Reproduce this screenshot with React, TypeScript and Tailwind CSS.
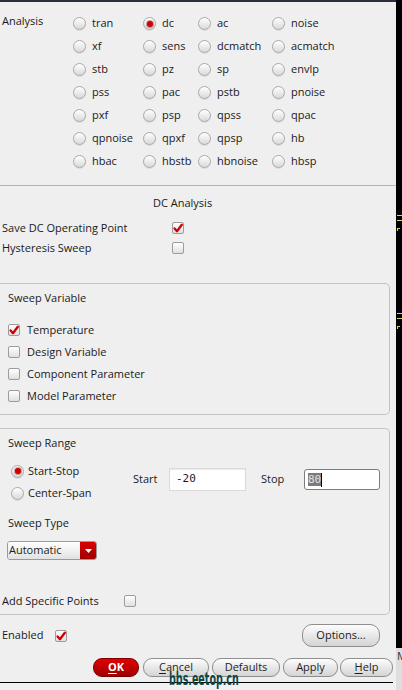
import type { ReactNode } from "react";

const analyses = [
  ["tran", "dc", "ac", "noise"],
  ["xf", "sens", "dcmatch", "acmatch"],
  ["stb", "pz", "sp", "envlp"],
  ["pss", "pac", "pstb", "pnoise"],
  ["pxf", "psp", "qpss", "qpac"],
  ["qpnoise", "qpxf", "qpsp", "hb"],
  ["hbac", "hbstb", "hbnoise", "hbsp"],
];

function Radio({ on }: { on?: boolean }) {
  return (
    <span className="flex h-[13px] w-[13px] shrink-0 items-center justify-center rounded-full border border-[#a9a9a9] bg-linear-to-b from-[#ffffff] to-[#d9d9d9] shadow-[0_1px_0_rgba(0,0,0,0.08)]">
      {on && <span className="h-[6px] w-[6px] rounded-full bg-[#d20000] shadow-[0_0_0_1px_rgba(120,0,0,0.35)]" />}
    </span>
  );
}

function Check({ on }: { on?: boolean }) {
  return (
    <span className="flex h-[12px] w-[12px] shrink-0 items-center justify-center rounded-[2px] border border-[#9c9c9c] bg-linear-to-b from-white to-[#e0e0e0]">
      {on && (
        <svg width="10" height="10" viewBox="0 0 10 10">
          <path
            d="M1.6 5.4 L4 8.2 L8.8 1.8"
            fill="none"
            stroke="#d00000"
            strokeWidth="2.3"
            strokeLinecap="round"
            strokeLinejoin="round"
          />
        </svg>
      )}
    </span>
  );
}

function Btn({ children, className }: { children: ReactNode; className: string }) {
  return (
    <span
      className={`flex h-[19px] items-center justify-center rounded-[9px] border border-[#8e8e8e] bg-linear-to-b from-[#fdfdfd] to-[#d4d4d4] text-[11px] text-[#1e1e1e] ${className}`}
    >
      {children}
    </span>
  );
}

export default function App() {
  return (
    <div className="relative flex h-[690px] w-[402px] overflow-hidden bg-[#efefef] font-['Open_Sans',sans-serif] text-[11px] text-[#1a1a1a]">
      <div className="flex w-[396px] flex-col">
        <div className="h-[2px] bg-[#2b313c]" />

        {/* Analysis radio grid */}
        <div className="mt-[10px] flex">
          <div className="-mt-[3px] w-[73px] pl-[2px] leading-[23px]">Analysis</div>
          <div className="grid auto-rows-[23px] grid-cols-[70px_55px_74px_1fr]">
            {analyses.flat().map((name) => (
              <div key={name} className="flex items-center gap-[6px]">
                <Radio on={name === "dc"} />
                <span>{name}</span>
              </div>
            ))}
          </div>
        </div>

        <div className="mt-[12px] h-px bg-[#b3b3b3]" />

        <div className="mt-[9px] h-[16px] pl-[153px] leading-[16px]">DC Analysis</div>

        <div className="mt-[7px] flex h-[20px] items-center">
          <span className="w-[172px] pl-[2px]">Save DC Operating Point</span>
          <Check on />
        </div>
        <div className="flex h-[20px] items-center">
          <span className="w-[172px] pl-[2px]">Hysteresis Sweep</span>
          <Check />
        </div>

        {/* Sweep Variable */}
        <div className="mt-[25px] w-[390px] rounded-r-[5px] border-y border-r border-[#c3c3c3] pb-[7px] pl-[8px] pt-[6px]">
          <div className="h-[16px] leading-[16px]">Sweep Variable</div>
          <div className="mt-[13px] flex flex-col">
            {["Temperature", "Design Variable", "Component Parameter", "Model Parameter"].map((t, i) => (
              <div key={t} className="flex h-[22px] items-center gap-[7px]">
                <Check on={i === 0} />
                <span>{t}</span>
              </div>
            ))}
          </div>
        </div>

        {/* Sweep Range */}
        <div className="mt-[13px] w-[390px] rounded-r-[5px] border-y border-r border-[#c3c3c3] pb-[5px] pt-[6px]">
          <div className="h-[16px] pl-[8px] leading-[16px]">Sweep Range</div>
          <div className="mt-[9px] flex">
            <div className="flex w-[133px] flex-col pl-[11px]">
              <div className="flex h-[22px] items-center gap-[4px]">
                <Radio on />
                <span>Start-Stop</span>
              </div>
              <div className="flex h-[22px] items-center gap-[4px]">
                <Radio />
                <span>Center-Span</span>
              </div>
            </div>
            <div className="mt-[8px] flex h-[23px] items-center self-start">
              <span className="w-[36px]">Start</span>
              <span className="flex h-[23px] w-[77px] items-center border border-[#dadada] bg-white pl-[6px] font-['DejaVu_Sans_Mono',monospace] text-[11px] shadow-[inset_0_1px_1px_rgba(0,0,0,0.08)]">
                -20
              </span>
              <span className="ml-[15px] w-[43px]">Stop</span>
              <span className="flex h-[21px] w-[76px] items-center rounded-[3px] border border-[#7c7c7c] bg-white pl-[3px] font-['DejaVu_Sans_Mono',monospace] text-[11px]">
                <span className="bg-[#7b7b7b] leading-[13px] text-[#e4e4e4]">80</span>
                <span className="h-[14px] w-px bg-black" />
              </span>
            </div>
          </div>
          <div className="mt-[11px] h-[16px] pl-[8px] leading-[16px]">Sweep Type</div>
          <div className="ml-[7px] mt-[10px] flex h-[19px] w-[90px] overflow-hidden rounded-[3px] border border-[#9a9a9a]">
            <span className="flex flex-1 items-center bg-linear-to-b from-white to-[#e2e2e2] pl-[1px] text-[11px]">
              Automatic
            </span>
            <span className="flex w-[16px] items-center justify-center bg-linear-to-b from-[#dc0000] to-[#a00000]">
              <svg width="7" height="4" viewBox="0 0 7 4">
                <path d="M0 0 H7 L3.5 4 Z" fill="#ffffff" />
              </svg>
            </span>
          </div>
          <div className="mt-[33px] flex h-[16px] items-center">
            <span className="w-[124px] pl-[2px]">Add Specific Points</span>
            <Check />
          </div>
        </div>

        <div className="mt-[9px] flex h-[23px] items-center pr-[16px]">
          <span className="w-[55px] pl-[2px]">Enabled</span>
          <Check on />
          <span className="ml-auto flex h-[23px] w-[78px] items-center justify-center rounded-[10px] border border-[#8e8e8e] bg-linear-to-b from-[#fdfdfd] to-[#d4d4d4]">
            Options...
          </span>
        </div>

        <div className="mt-[11px] flex pl-[93px]">
          <span className="flex h-[19px] w-[46px] items-center justify-center rounded-[9px] border border-[#7a0000] bg-linear-to-b from-[#e40000] to-[#9e0000] font-bold text-white">
            <span className="underline underline-offset-2">O</span>K
          </span>
          <Btn className="ml-[4px] w-[66px]">
            <span className="underline underline-offset-2">C</span>ancel
          </Btn>
          <Btn className="ml-[3px] w-[68px]">Defaults</Btn>
          <Btn className="ml-[3px] w-[55px]">Apply</Btn>
          <Btn className="ml-[2px] w-[53px]">
            <span className="underline underline-offset-2">H</span>elp
          </Btn>
        </div>

        <div className="mt-[5px] h-px w-[393px] bg-black" />
        <div className="flex-1 bg-[#f1f1f1]" />
      </div>

      {/* edge of the window behind */}
      <div className="flex w-[6px] flex-col">
        <div className="flex h-[648px] flex-col bg-black">
          <div className="ml-[1px] mt-[215px] h-px w-[5px] bg-[#e8d44a]" />
          <div className="ml-[1px] mt-[4px] h-px w-[5px] bg-[#e8d44a]" />
          <div className="ml-[1px] mt-[7px] h-[3px] w-[3px] border-l border-t border-[#e8d44a]" />
          <div className="ml-[1px] mt-[82px] h-px w-[5px] bg-[#e8d44a]" />
          <div className="ml-[1px] mt-[4px] h-px w-[5px] bg-[#e8d44a]" />
          <div className="ml-[1px] mt-[7px] h-[3px] w-[3px] border-l border-t border-[#e8d44a]" />
        </div>
        <div className="flex-1 overflow-hidden bg-[#dedede] pl-[1px] text-[11px] leading-[16px] text-[#333]">M</div>
      </div>

      {/* watermark */}
      <span className="absolute left-[169px] top-[670px] origin-left scale-x-[0.56] font-['DejaVu_Sans',sans-serif] text-[17px] font-bold leading-[18px] text-[#0d4646]">
        bbs.eetop.cn
      </span>
    </div>
  );
}
